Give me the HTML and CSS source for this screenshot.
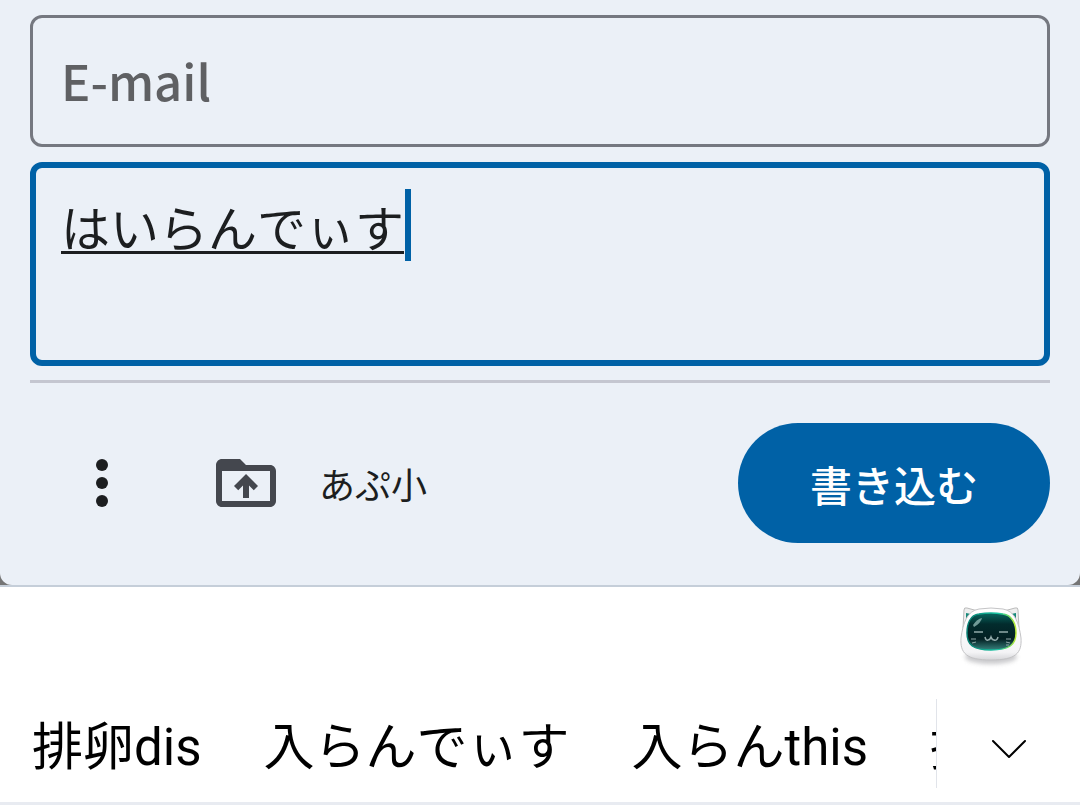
FILE: index.html
```html
<!DOCTYPE html>
<html lang="ja">

<head>
    <meta charset="UTF-8">
    <meta name="viewport" content="width=device-width, initial-scale=1">
    <title>書き込む</title>
    <link rel="stylesheet" href="styles.css">
</head>

<body>
    <div class="backdrop">
        <form class="sheet">
            <input class="field" type="email" placeholder="E-mail" aria-label="E-mail">
            <div class="message">
                <textarea class="field message-text" aria-label="本文" spellcheck="false">はいらんでぃす</textarea>
                <span class="caret"></span>
            </div>
            <hr class="divider">
            <div class="toolbar">
                <button class="icon-btn" type="button" aria-label="メニュー">
                    <svg viewBox="0 0 24 24" fill="#1c1e20">
                        <circle cx="12" cy="6" r="2"/>
                        <circle cx="12" cy="12" r="2"/>
                        <circle cx="12" cy="18" r="2"/>
                    </svg>
                </button>
                <button class="icon-btn" type="button" aria-label="アップロード">
                    <svg viewBox="0 0 24 24" fill="#44474e">
                        <path d="M20 6h-8l-2-2H4c-1.100 0-2 .9-2 2v12c0 1.100.9 2 2 2h16c1.100 0 2-.9 2-2V8c0-1.100-.9-2-2-2zm0 12H4V8h16v10zM8 13.010l1.410 1.410L11 12.840V17h2v-4.160l1.590 1.590L16 13.010 12.010 9 8 13.010z"/>
                    </svg>
                </button>
                <button class="size-btn" type="button">あぷ小</button>
                <button class="submit-btn" type="submit">書き込む</button>
            </div>
        </form>
    </div>
    <div class="keyboard">
        <div class="keyboard-top">
            <button class="mascot" type="button" aria-label="マスコット">
                <svg viewBox="0 0 72 72">
                    <defs>
                        <linearGradient id="shell" x1="0" y1="0" x2="0" y2="1">
                            <stop offset="0" stop-color="#fff"/>
                            <stop offset=".85" stop-color="#f4f4f6"/>
                            <stop offset="1" stop-color="#d6d6d9"/>
                        </linearGradient>
                        <linearGradient id="screen" x1="0" y1="0" x2="0" y2="1">
                            <stop offset="0" stop-color="#07675f"/>
                            <stop offset=".3" stop-color="#022c2d"/>
                            <stop offset=".7" stop-color="#031f22"/>
                            <stop offset="1" stop-color="#36817c"/>
                        </linearGradient>
                        <linearGradient id="rim" x1="0" y1="0" x2="1" y2="0">
                            <stop offset="0" stop-color="#087f73"/>
                            <stop offset=".65" stop-color="#16c9a5"/>
                            <stop offset="1" stop-color="#b9e931"/>
                        </linearGradient>
                        <filter id="soft" x="-20%" y="-50%" width="140%" height="200%">
                            <feGaussianBlur stdDeviation="2"/>
                        </filter>
                    </defs>
                    <ellipse cx="36" cy="58" rx="26" ry="7" fill="#b4b4b8" opacity=".7" filter="url(#soft)"/>
                    <path d="M8 29 9 11Q9 8 12 9L23 12 49 12 60 9Q63 8 63 11L64 29Z" fill="#eee" stroke="#bbb"/>
                    <path d="M11 20V14l5 1zM61 20V14l-5 1z" fill="#168879"/>
                    <path d="M24 10Q36 8 48 10C60 12 64 24 66 39C67 54 61 61 36 61S5 54 6 39C8 24 12 12 24 10Z" fill="url(#shell)" stroke="#c4c4c6"/>
                    <path d="M24 15Q36 13 48 15C57 16 61 25 61 34C61 46 54 51 36 51S12 46 12 34C12 25 15 16 24 15Z" fill="url(#screen)" stroke="url(#rim)" stroke-width="1.500"/>
                    <path d="M18 26q4-6 9-7-1 5-8 9z" fill="#8cb5b1" opacity=".8"/>
                    <g fill="none" stroke="#91a9a9" stroke-width="1.500">
                        <path d="M19 33h9M44 33h9M30 38q1 4 3 3 2 0 3-3 1 3 3 3 3 1 4-3"/>
                        <path d="M16 40h5M17 44l4-1M51 40h5M51 43l4 1M51 46h3" stroke-width="1"/>
                    </g>
                </svg>
            </button>
        </div>
        <div class="suggestions">
            <div class="candidates">
                <button class="candidate" type="button">排卵dis</button>
                <button class="candidate" type="button">入らんでぃす</button>
                <button class="candidate" type="button">入らんthis</button>
                <button class="candidate" type="button">排</button>
            </div>
            <button class="expand-btn" type="button" aria-label="候補をすべて表示">
                <svg viewBox="0 0 36 20">
                    <path d="M2 2 18 18 34 2" fill="none" stroke="#000" stroke-width="2" stroke-linecap="round" stroke-linejoin="round"/>
                </svg>
            </button>
        </div>
    </div>
</body>

</html>
```
FILE: styles.css
```css
* {
    margin: 0;
    padding: 0;
    box-sizing: border-box;
}

body {
    background-color: #fff;
    font-family: "Noto Sans CJK JP", sans-serif;
    font-kerning: none;
    color: #1c1e20;
}

button {
    border: none;
    background: none;
    font-family: inherit;
    font-kerning: inherit;
    color: inherit;
    cursor: pointer;
}

svg {
    display: block;
    width: 100%;
}

.backdrop {
    background-color: #757575;
    border-bottom: 2px solid #c5ced9;
}

.sheet {
    display: flex;
    flex-direction: column;
    padding: 15px 30px 42px;
    border-radius: 0 0 12px 12px;
    background-color: #ebf0f7;
}

.field {
    display: block;
    width: 100%;
    height: 132px;
    padding: 0 28px 4px;
    border: 3px solid #757880;
    border-radius: 12px;
    outline: none;
    background: none;
    font-family: inherit;
    font-size: 49px;
    font-weight: 500;
    font-kerning: inherit;
    color: inherit;
}

.field::placeholder {
    color: #5f6063;
    opacity: 1;
}

/* message box */
.message {
    position: relative;
    margin-top: 15px;
}

.message-text {
    height: 204px;
    padding: 22px 25px;
    border: 6px solid #0061a6;
    font-weight: 400;
    line-height: 72px;
    text-decoration: underline;
    text-decoration-thickness: 3px;
    text-underline-offset: 4px;
    text-decoration-skip-ink: none;
    resize: none;
}

.caret {
    position: absolute;
    top: 27px;
    left: 375px;
    width: 6px;
    height: 72px;
    background-color: #0061a6;
}

.divider {
    height: 3px;
    margin-top: 14px;
    border: none;
    background-color: #c4c6d0;
}

/* toolbar */
.toolbar {
    display: flex;
    align-items: center;
    margin-top: 40px;
    padding-left: 36px;
}

.icon-btn {
    width: 72px;
    margin-right: 72px;
}

.icon-btn + .icon-btn {
    margin-right: 37px;
}

.size-btn {
    font-size: 36px;
}

.submit-btn {
    height: 120px;
    margin-left: auto;
    padding: 0 72px;
    border-radius: 60px;
    background-color: #0061a6;
    font-size: 42px;
    font-weight: 500;
    color: #fff;
}

/* keyboard */
.keyboard {
    border-bottom: 3px solid #e8ebf1;
}

.keyboard-top {
    display: flex;
    justify-content: flex-end;
    height: 112px;
    padding: 12px 53px 0;
}

.mascot {
    width: 72px;
    height: 72px;
}

.suggestions {
    display: flex;
    height: 103px;
    padding-bottom: 14px;
}

.candidates {
    display: flex;
    flex: 1;
    align-items: center;
    gap: 62px;
    min-width: 0;
    padding: 0 0 2px 32px;
    overflow: hidden;
}

.candidate {
    flex: none;
    font-family: Roboto, "Noto Sans CJK JP", sans-serif;
    font-size: 51px;
    color: #000;
    white-space: nowrap;
}

.expand-btn {
    display: flex;
    align-items: center;
    justify-content: center;
    width: 144px;
    padding-top: 10px;
    border-left: 1px solid #e1e4ea;
}

.expand-btn svg {
    width: 36px;
}
```
